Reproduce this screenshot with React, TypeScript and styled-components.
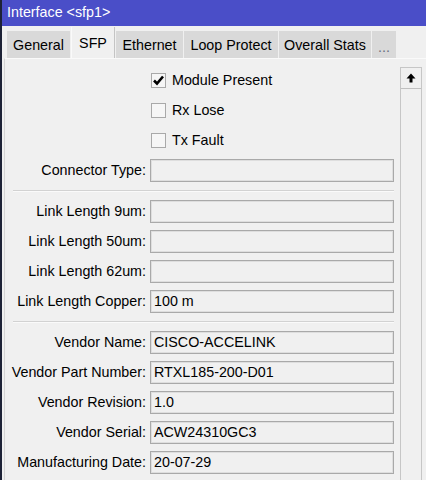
import * as React from "react";
import styled, { createGlobalStyle } from "styled-components";

const Global = createGlobalStyle`
  html, body { margin: 0; padding: 0; background: #f0f0f0; }
  body { font-family: "Liberation Sans", Arial, sans-serif; font-size: 14.3px; color: #000; }
`;

const Window = styled.div`
  width: 426px;
  height: 480px;
  overflow: hidden;
  box-sizing: border-box;
  border-left: 2px solid #1d2236;
  background: #f0f0f0;
  display: flex;
  flex-direction: column;
`;

const TitleBar = styled.div`
  height: 26px;
  line-height: 25px;
  padding-left: 5px;
  background: #4a4ec8;
  color: #fff;
  flex-shrink: 0;
`;

const TabStrip = styled.div`
  height: 32px;
  display: flex;
  align-items: flex-end;
  gap: 1px;
  padding-left: 5px;
  flex-shrink: 0;
`;

const Tab = styled.div<{ w: number; active?: boolean; dim?: boolean }>`
  width: ${(p) => p.w}px;
  height: ${(p) => (p.active ? 31 : 27)}px;
  box-sizing: border-box;
  display: flex;
  align-items: center;
  justify-content: center;
  background: ${(p) => (p.active ? "#f0f0f0" : "#d9d9d9")};
  border-right: ${(p) => (p.active ? "1px solid #c4c4c4" : "none")};
  border-left: ${(p) => (p.active ? "1px solid #fafafa" : "none")};
  color: ${(p) => (p.dim ? "#6a7080" : "#000")};
  padding-top: ${(p) => (p.dim ? "5px" : "0")};
  white-space: nowrap;
`;

const Panel = styled.div`
  flex: 1;
  margin-left: 2px;
  border-left: 1px solid #d4d4d4;
  border-top: 1px solid #fafafa;
  display: flex;
  min-height: 0;
`;

const Form = styled.div`
  width: 395px;
  padding-top: 6px;
  display: flex;
  flex-direction: column;
  flex-shrink: 0;
`;

const Row = styled.div`
  height: 30px;
  flex-shrink: 0;
  display: grid;
  grid-template-columns: 141px 244px;
  column-gap: 4px;
  align-items: center;
`;

const Label = styled.div`
  text-align: right;
  white-space: nowrap;
`;

const Field = styled.div`
  height: 23px;
  box-sizing: border-box;
  border: 1px solid #a9a9a9;
  box-shadow: inset 0 0 0 1px #dedede;
  padding-left: 3px;
  display: flex;
  align-items: center;
  white-space: nowrap;
`;

const CheckLabel = styled.label`
  grid-column: 2;
  display: flex;
  align-items: center;
  gap: 6px;
  padding-left: 1px;
`;

const Box = styled.span`
  width: 15px;
  height: 15px;
  box-sizing: border-box;
  border: 1px solid #a9a9a9;
  background: #f6f6f6;
  display: flex;
  align-items: center;
  justify-content: center;
`;

const Separator = styled.div`
  height: 11px;
  flex-shrink: 0;
  margin-left: 8px;
  margin-right: 6px;
  display: flex;
  align-items: center;
  &::after {
    content: "";
    flex: 1;
    height: 2px;
    background: #d2d2d2;
    border-bottom: 1px solid #fafafa;
    box-sizing: border-box;
  }
`;

const ScrollBar = styled.div`
  width: 22px;
  margin-top: 8px;
  box-sizing: border-box;
  border-left: 1px solid #c6c6c6;
  border-right: 1px solid #c6c6c6;
  border-top: 1px solid #c6c6c6;
  background: #f0f0f0;
`;

const UpButton = styled.div`
  height: 21px;
  box-sizing: border-box;
  border-bottom: 1px solid #c0c0c0;
  display: flex;
  align-items: center;
  justify-content: center;
`;

const Check = () => (
  <svg width="11" height="11" viewBox="0 0 11 11">
    <path d="M1 5.5 L4 8.5 L10 1.5" fill="none" stroke="#000" strokeWidth="2.6" />
  </svg>
);

const UpArrow = () => (
  <svg width="10" height="10" viewBox="0 0 10 10">
    <path d="M5 0.5 L9.5 5.5 L6.5 5.5 L6.5 9.5 L3.5 9.5 L3.5 5.5 L0.5 5.5 Z" fill="#000" />
  </svg>
);

const tabs = [
  { name: "General", w: 63 },
  { name: "SFP", w: 44, active: true },
  { name: "Ethernet", w: 67 },
  { name: "Loop Protect", w: 94 },
  { name: "Overall Stats", w: 92 },
  { name: "...", w: 24, dim: true },
];

const checks = [
  { name: "Module Present", on: true },
  { name: "Rx Lose", on: false },
  { name: "Tx Fault", on: false },
];

type Item = [string, string] | "sep";

const items: Item[] = [
  ["Connector Type", ""],
  "sep",
  ["Link Length 9um", ""],
  ["Link Length 50um", ""],
  ["Link Length 62um", ""],
  ["Link Length Copper", "100 m"],
  "sep",
  ["Vendor Name", "CISCO-ACCELINK"],
  ["Vendor Part Number", "RTXL185-200-D01"],
  ["Vendor Revision", "1.0"],
  ["Vendor Serial", "ACW24310GC3"],
  ["Manufacturing Date", "20-07-29"],
];

const App: React.FC = () => {
  return (
    <Window>
      <Global />
      <TitleBar>Interface &lt;sfp1&gt;</TitleBar>
      <TabStrip>
        {tabs.map((t) => (
          <Tab key={t.name} w={t.w} active={t.active} dim={t.dim}>
            {t.name}
          </Tab>
        ))}
      </TabStrip>
      <Panel>
        <Form>
          {checks.map((c) => (
            <Row key={c.name}>
              <CheckLabel>
                <Box>{c.on && <Check />}</Box>
                {c.name}
              </CheckLabel>
            </Row>
          ))}
          {items.map((r, i) =>
            r === "sep" ? (
              <Separator key={i} />
            ) : (
              <Row key={r[0]}>
                <Label>{r[0]}:</Label>
                <Field>{r[1]}</Field>
              </Row>
            )
          )}
        </Form>
        <ScrollBar>
          <UpButton>
            <UpArrow />
          </UpButton>
        </ScrollBar>
      </Panel>
    </Window>
  );
};

export default App;
